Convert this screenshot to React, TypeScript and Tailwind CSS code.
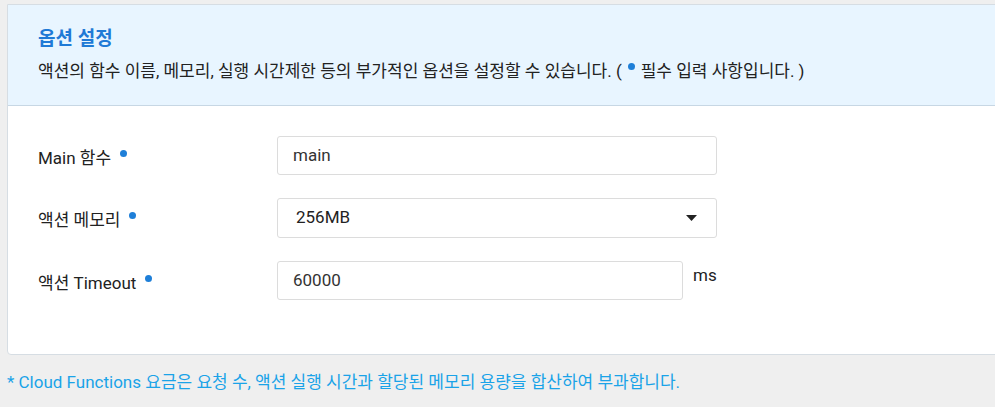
import React from "react";

const Dot = () => (
  <span className="inline-block w-[7px] h-[7px] rounded-full bg-[#1e7fd8] align-top ml-[9px] mt-[4px]" />
);

export default function App() {
  return (
    <div
      className="w-[995px] h-[407px] bg-[#efefef] overflow-hidden pt-[4px] pl-[7px]"
      style={{ fontFamily: 'Roboto, "Noto Sans CJK KR", sans-serif' }}
    >
      <div className="w-[1000px] bg-white border border-[#d6dde3] rounded-bl-[4px] h-[351px]">
        <div className="bg-[#e8f5ff] border-b border-[#c7d7e4] h-[101px] pl-[30px] pt-[20px]">
          <div className="text-[19px] font-bold text-[#1f7ad6] leading-[28px]">옵션 설정</div>
          <div className="text-[17px] text-[#222] leading-[24px] mt-[6px]">
            액션의 함수 이름, 메모리, 실행 시간제한 등의 부가적인 옵션을 설정할 수 있습니다. (
            <span className="inline-block w-[7px] h-[7px] rounded-full bg-[#1e7fd8] align-top mt-[4px] mx-[6px]" />
            필수 입력 사항입니다. )
          </div>
        </div>
        <div className="pl-[30px] pt-[30px] flex flex-col gap-[23px]">
          <div className="flex items-center h-[39px]">
            <div className="w-[239px] text-[17px] text-[#222] leading-[24px] pt-[4px]">
              Main 함수
              <Dot />
            </div>
            <div className="w-[440px] h-[39px] border border-[#dcdcdc] rounded-[3px] flex items-center pl-[15px] text-[17px] text-[#333]">
              main
            </div>
          </div>
          <div className="flex items-center h-[40px]">
            <div className="w-[239px] text-[17px] text-[#222] leading-[24px] pt-[4px]">
              액션 메모리
              <Dot />
            </div>
            <div className="w-[440px] h-[40px] border border-[#dcdcdc] rounded-[3px] flex items-center justify-between pl-[18px] pr-[19px] text-[17px] text-[#222]">
              <span>256MB</span>
              <svg width="11" height="6" viewBox="0 0 11 6">
                <path d="M0 0 H11 L5.5 6 Z" fill="#222" />
              </svg>
            </div>
          </div>
          <div className="flex items-start h-[39px]">
            <div className="w-[239px] text-[17px] text-[#222] self-center leading-[24px] pt-[4px]">
              액션 Timeout
              <Dot />
            </div>
            <div className="w-[406px] h-[39px] border border-[#dcdcdc] rounded-[3px] flex items-center pl-[15px] text-[17px] text-[#333]">
              60000
            </div>
            <div className="ml-[10px] text-[17px] text-[#222] leading-[24px] mt-[2px]">ms</div>
          </div>
        </div>
      </div>
      <div className="mt-[15px] text-[17px] text-[#1aa3e8] leading-[24px]">
        * Cloud Functions 요금은 요청 수, 액션 실행 시간과 할당된 메모리 용량을 합산하여 부과합니다.
      </div>
    </div>
  );
}
